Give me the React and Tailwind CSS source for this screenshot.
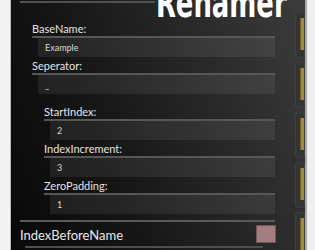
const font = { fontFamily: '"Lato", "Open Sans", sans-serif' };

function Field({ label, value }) {
  return (
    <div className="flex flex-col">
      <div className="h-[15px] text-[11px] leading-[15px] text-[#e4e4e4]">{label}</div>
      <div className="h-[2px] bg-[#575757]" />
      <div className="ml-[6px] h-[19px] bg-white/[0.07] pl-[7px] flex items-center text-[9px] text-[#d8d8d8]">
        {value}
      </div>
    </div>
  );
}

function Tab() {
  return (
    <div className="h-[46px] shrink-0 rounded-[3px] bg-[#343434] border border-[#404040] flex justify-end pt-[5px]">
      <div className="w-[4px] h-[32px] bg-[#a08a3c] border-l border-[#6e5f2a]" />
    </div>
  );
}

export default function App() {
  return (
    <div className="flex w-[315px] h-[250px] overflow-hidden bg-[#f1f1f1]" style={font}>
      <div className="w-[10px] shrink-0 bg-[#f3f3f3]" />
      <div className="w-[1px] shrink-0 bg-[#b8b8b8]" />
      <div className="w-[294px] shrink-0 flex overflow-hidden bg-[linear-gradient(70deg,#080808_0%,#161616_35%,#2a2a2a_70%,#3c3c3c_100%)]">
        <div className="w-[284px] shrink-0 flex flex-col pr-[20px]">
          {/* title sits over the header line, top clipped */}
          <div className="relative h-[17px] pl-[9px] pr-[120px] pt-[1px]">
            <div className="h-[1.5px] bg-[#505050]" />
            <span
              className="absolute -top-[17px] -right-[12px] text-[40px] leading-none font-bold text-white whitespace-nowrap scale-x-[0.72] origin-right"
              style={{ fontFamily: '"Liberation Sans Narrow", "DejaVu Sans Condensed", sans-serif' }}
            >
              Renamer
            </span>
          </div>
          <div className="mt-[4px] pl-[21px] flex flex-col gap-[1px]">
            <Field label="BaseName:" value="Example" />
            <Field label="Seperator:" value="_" />
          </div>
          <div className="mt-[10px] pl-[33px] flex flex-col gap-[1px]">
            <Field label="StartIndex:" value="2" />
            <Field label="IndexIncrement:" value="3" />
            <Field label="ZeroPadding:" value="1" />
          </div>
          <div className="mt-[6px] pl-[9px]">
            <div className="h-[2px] bg-[#5a5a5a]" />
          </div>
          <div className="pl-[9px] h-[24px] flex items-start justify-between">
            <span className="mt-[5px] text-[13px] leading-[16px] text-[#e8e8e8]">IndexBeforeName</span>
            <div className="mt-[3px] -mr-[1px] w-[20px] h-[18px] bg-[#a47d81] border border-[#6f5659]" />
          </div>
          <div className="ml-[14px] mr-[12px] h-[1.5px] bg-[#4e4e4e]" />
        </div>
        <div className="w-[10px] shrink-0 flex flex-col gap-[4px] pt-[12px]">
          <Tab />
          <Tab />
          <Tab />
          <Tab />
          <Tab />
        </div>
      </div>
      <div className="w-[2px] shrink-0 bg-[#a8a8a8]" />
      <div className="w-[8px] shrink-0 bg-[#efefef]" />
    </div>
  );
}
